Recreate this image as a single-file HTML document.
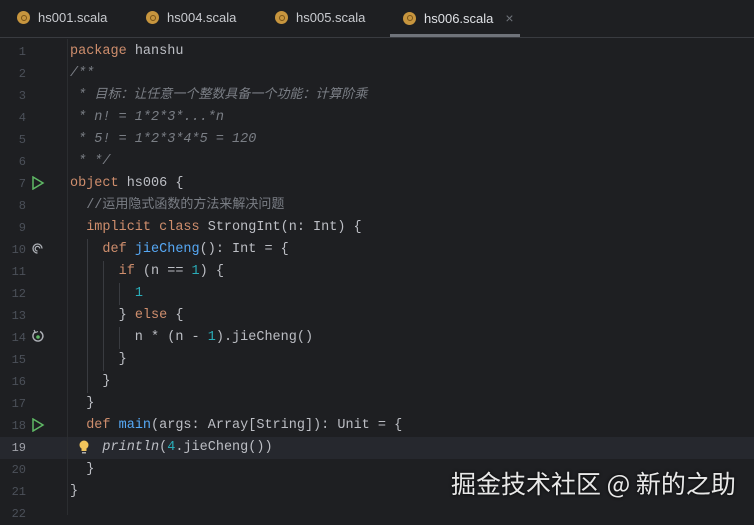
<!DOCTYPE html>
<html><head><meta charset="utf-8"><style>
*{margin:0;padding:0;box-sizing:border-box}
body{width:754px;height:515px;background:#1e1f22;overflow:hidden;position:relative;font-family:"Liberation Mono",monospace}
.tabs{position:absolute;left:0;top:0;width:754px;height:38px;border-bottom:1px solid #393b40;background:#1e1f22}
.tab{position:absolute;top:10px;font:13px "Liberation Sans",sans-serif;color:#c9cbd0;display:flex;align-items:center}
.ic{width:13px;height:13px;border-radius:50%;background:#c7953e;margin-right:8px;position:relative}
.ic::after{content:"";position:absolute;left:3.5px;top:3.5px;width:6px;height:6px;border-radius:50%;border:1.3px solid #7a5418;box-sizing:border-box}
.ul{position:absolute;left:390px;top:34px;width:130px;height:3px;background:#6f737a}
.gsep{position:absolute;left:67px;top:39px;width:1px;height:476px;background:#2b2d30}
.ln{position:absolute;left:0;width:26px;text-align:right;font-size:12px;color:#4b5059;line-height:22px}
.code{position:absolute;left:70px;font-size:13.5px;white-space:pre;color:#bcbec4;line-height:22px;height:22px}
.k{color:#cf8e6d}.f{color:#56a8f5}.n{color:#2aacb8}.c{color:#7a7e85;font-style:italic}.c2{color:#7a7e85}
.cj{font-family:"Noto Sans CJK SC",sans-serif;font-size:13px;line-height:1}
.cur{position:absolute;left:0;top:437px;width:754px;height:22px;background:#26282e}
.guide{position:absolute;width:1px;background:#393b40}
.wm{position:absolute;left:451px;top:466px;font:25px "Noto Sans CJK SC",sans-serif;color:#e8e8e8;text-shadow:0 0 3px #000;line-height:34px}
</style></head><body>
<div class="tabs">
<div class="tab" style="left:17px"><span class="ic"></span>hs001.scala</div>
<div class="tab" style="left:146px"><span class="ic"></span>hs004.scala</div>
<div class="tab" style="left:275px"><span class="ic"></span>hs005.scala</div>
<div class="tab" style="left:403px;color:#dfe1e5"><span class="ic"></span>hs006.scala<span style="margin-left:12px;color:#6f737a;font-size:14px">×</span></div>
<div class="ul"></div>
</div>
<div class="cur"></div>
<div class="gsep"></div>
<div class="guide" style="left:87px;top:239px;height:154px"></div>
<div class="guide" style="left:103px;top:261px;height:110px"></div>
<div class="guide" style="left:119px;top:283px;height:22px"></div>
<div class="guide" style="left:119px;top:327px;height:22px"></div>
<div id="lines"></div>
<script>
const L=[
'<span class="k">package</span> hanshu',
'<span class="c">/**</span>',
'<span class="c"> * <span class="cj">目标：让任意一个整数具备一个功能：计算阶乘</span></span>',
'<span class="c"> * n! = 1*2*3*...*n</span>',
'<span class="c"> * 5! = 1*2*3*4*5 = 120</span>',
'<span class="c"> * */</span>',
'<span class="k">object</span> hs006 {',
'  <span class="c2">//<span class="cj">运用隐式函数的方法来解决问题</span></span>',
'  <span class="k">implicit class</span> StrongInt(n: Int) {',
'    <span class="k">def</span> <span class="f">jieCheng</span>(): Int = {',
'      <span class="k">if</span> (n == <span class="n">1</span>) {',
'        <span class="n">1</span>',
'      } <span class="k">else</span> {',
'        n * (n - <span class="n">1</span>).jieCheng()',
'      }',
'    }',
'  }',
'  <span class="k">def</span> <span class="f">main</span>(args: Array[String]): Unit = {',
'    <span style="font-style:italic">println</span>(<span class="n">4</span>.jieCheng())',
'  }',
'}',
''];
let h='';
L.forEach((s,i)=>{const y=41+i*22;
h+=`<div class="ln" style="top:${y}px;${i==18?'color:#a1a3ab':''}">${i+1}</div><div class="code" style="top:${y}px">${s}</div>`;});
document.getElementById('lines').innerHTML=h;
</script>
<svg style="position:absolute;left:31px;top:176px" width="14" height="14"><path d="M2 1 L12 7 L2 13 Z" fill="none" stroke="#5fb865" stroke-width="1.5"/></svg>
<svg style="position:absolute;left:31px;top:418px" width="14" height="14"><path d="M2 1 L12 7 L2 13 Z" fill="none" stroke="#5fb865" stroke-width="1.5"/></svg>
<svg style="position:absolute;left:31px;top:242px" width="13" height="13"><path d="M6.5 11 A4.5 4.5 0 1 1 11 6.5 M6.5 9 A2.3 2.3 0 1 1 8.8 6.5" fill="none" stroke="#aeb1b7" stroke-width="1.3"/></svg>
<svg style="position:absolute;left:31px;top:329px" width="14" height="14"><path d="M9 2.5 A5 5 0 1 1 4 3" fill="none" stroke="#aeb1b7" stroke-width="1.4"/><path d="M3 1 L4.5 3.5 L7 2.5" fill="none" stroke="#aeb1b7" stroke-width="1.2"/><circle cx="7" cy="8" r="1.8" fill="#5fb865"/></svg>
<svg style="position:absolute;left:78px;top:439px" width="12" height="16"><circle cx="6" cy="6" r="4.5" fill="#f2c55c"/><rect x="3.5" y="10" width="5" height="2" fill="#f2c55c"/><rect x="4" y="13" width="4" height="1.5" fill="#aaa"/></svg>
<div class="wm">掘金技术社区 @ 新的之助</div>
</body></html>
